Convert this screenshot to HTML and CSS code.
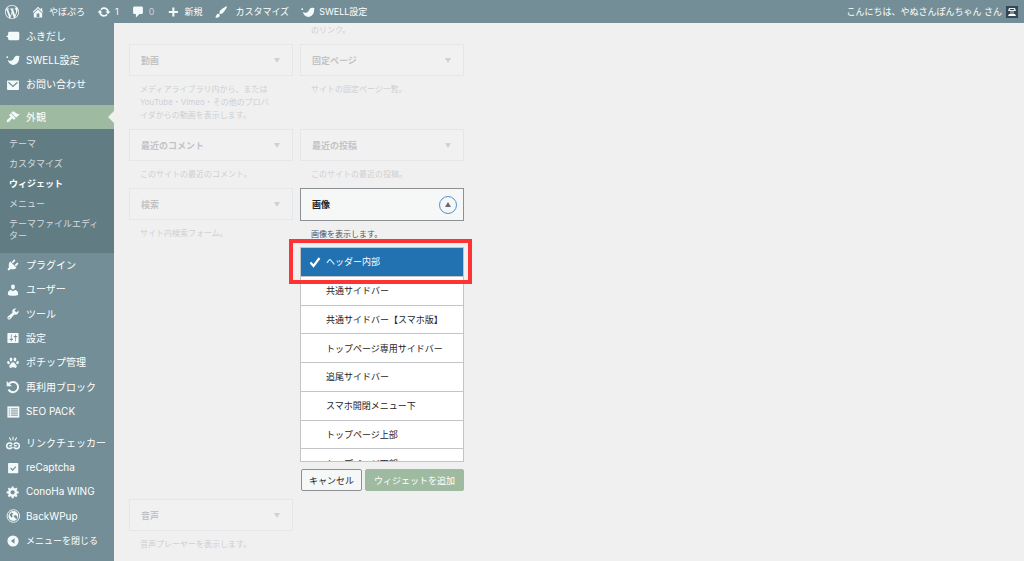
FILE: index.html
```html
<!DOCTYPE html>
<html lang="ja">
<head>
<meta charset="utf-8">
<title>ウィジェット</title>
<link rel="stylesheet" href="styles.css">
</head>
<body>
<header class="bar">
  <a class="bar-item bar-logo" href="#" aria-label="WordPress"><svg class="icon" viewBox="0 0 20 20"><path d="M20 10c0-5.51-4.49-10-10-10C4.48 0 0 4.49 0 10c0 5.52 4.48 10 10 10 5.51 0 10-4.48 10-10zM7.78 15.37L4.37 6.22c.55-.02 1.17-.08 1.17-.08.5-.06.44-1.13-.06-1.11 0 0-1.45.11-2.37.11-.18 0-.37 0-.58-.01C4.12 2.69 6.87 1.11 10 1.11c2.33 0 4.45.87 6.05 2.34-.68-.11-1.65.39-1.65 1.58 0 .74.45 1.36.9 2.1.35.61.55 1.36.55 2.46 0 1.49-1.4 5-1.4 5l-3.03-8.37c.54-.02.82-.17.82-.17.5-.05.44-1.25-.06-1.22 0 0-1.44.12-2.38.12-.87 0-2.33-.12-2.33-.12-.5-.03-.56 1.2-.06 1.22l.92.08 1.26 3.41zM17.41 10c.24-.64.74-1.87.43-4.25.7 1.29 1.05 2.71 1.05 4.25 0 3.29-1.73 6.24-4.4 7.78.97-2.59 1.94-5.2 2.92-7.78zM6.1 18.09C3.12 16.65 1.11 13.53 1.11 10c0-1.3.23-2.48.72-3.59C3.25 10.3 4.67 14.2 6.1 18.09zm4.03-6.63l2.58 6.98c-.86.29-1.76.45-2.71.45-.79 0-1.57-.11-2.29-.33.81-2.38 1.62-4.74 2.42-7.1z"/></svg></a>
  <a class="bar-item" href="#"><svg class="icon" viewBox="0 0 20 20"><path d="M16 8.5l1.53 1.53-1.06 1.06L10 4.6l-6.47 6.49-1.06-1.06L10 2.5l4 4v-2h2v4zm-6-2.46l6 5.99V18H4v-5.97zM12 17v-5H8v5h4z"/></svg>やぼぷろ</a>
  <a class="bar-item" href="#"><svg class="icon" viewBox="0 0 20 20"><path d="M10.2 3.28c3.53 0 6.43 2.61 6.92 6h2.08l-3.5 4-3.5-4h2.32c-.45-1.97-2.21-3.45-4.32-3.45-1.45 0-2.73.71-3.54 1.78L4.95 5.66C6.23 4.2 8.11 3.28 10.2 3.28zm-.4 13.44c-3.52 0-6.43-2.61-6.92-6H.8l3.5-4c1.17 1.33 2.33 2.67 3.5 4H5.48c.45 1.97 2.21 3.45 4.32 3.45 1.45 0 2.73-.71 3.54-1.78l1.71 1.95c-1.28 1.46-3.15 2.38-5.25 2.38z"/></svg>1</a>
  <a class="bar-item" href="#"><svg class="icon" viewBox="0 0 20 20"><path d="M5 2h10c1.100 0 2 .9 2 2v7c0 1.100-.9 2-2 2h-3l-5 5v-5H5c-1.100 0-2-.9-2-2V4c0-1.100.9-2 2-2z"/></svg><span class="muted">0</span></a>
  <a class="bar-item" href="#"><svg class="icon" viewBox="0 0 20 20"><path d="M17 8.500v3h-5v5H9v-5H4v-3h5v-5h3v5h5z"/></svg>新規</a>
  <a class="bar-item bar-wide" href="#"><svg class="icon" viewBox="0 0 20 20"><path d="M18.33 3.57s.27-.8-.31-1.36c-.53-.52-1.22-.24-1.22-.24-.61.3-5.76 3.47-7.67 5.57-.86.96-2.06 3.79-1.09 4.82.92.98 3.96-.17 4.79-1 2.06-2.06 5.21-7.17 5.5-7.79zM1.4 17.65c2.37-1.56 1.46-3.41 3.23-4.64.93-.65 2.22-.62 3.08.29.63.67.8 2.57-.16 3.46-1.57 1.45-4 1.55-6.15.89z"/></svg>カスタマイズ</a>
  <a class="bar-item" href="#"><svg class="icon" viewBox="0 0 20 20"><path d="M2.500 10c2 1.500 5.500 1.800 8-1C12 7 12.500 4 16 4c1.500 0 2.500.8 3.500 1-.8.8-.8 1.500-.8 3 0 5-3.700 9-8.200 9-4 0-6.800-3-8-7z"/><circle cx="1.800" cy="6" r="1.300"/></svg>SWELL設定</a>
  <a class="bar-item bar-account" href="#">こんにちは、やぬさんぽんちゃん さん<svg class="avatar" viewBox="0 0 12 12"><rect width="12" height="12" fill="#33475b"/><path d="M3 2h6l1 3H2z" fill="#e8eeee"/><path d="M4 5h4v3H4z" fill="#7d8b98"/><path d="M3 8h6l1 2H2z" fill="#fff"/><path d="M4 3h4v1H4z" fill="#33475b"/></svg></a>
</header>
<div class="layout">
  <nav class="side" aria-label="メインメニュー">
    <div class="group group-first">
      <a class="item" href="#"><svg class="icon" viewBox="0 0 20 20"><path d="M5 4h12q2 0 2 2v8q0 2-2 2H5q-2 0-2-2v-2L0 10.500 3 9V6q0-2 2-2z"/></svg>ふきだし</a>
      <a class="item" href="#"><svg class="icon" viewBox="0 0 20 20"><path d="M2.500 10c2 1.500 5.500 1.800 8-1C12 7 12.500 4 16 4c1.500 0 2.500.8 3.500 1-.8.8-.8 1.500-.8 3 0 5-3.700 9-8.200 9-4 0-6.800-3-8-7z"/><circle cx="1.800" cy="6" r="1.300"/></svg>SWELL設定</a>
      <a class="item" href="#"><svg class="icon" viewBox="0 0 20 20"><rect x="1.500" y="3.500" width="17" height="13.500" rx="1"/><path d="M3.500 6l6.500 6 6.500-6" fill="none" stroke="#738e96" stroke-width="1.800"/></svg>お問い合わせ</a>
    </div>
    <a class="item item-current" href="#"><svg class="icon" viewBox="0 0 20 20"><path d="M14.480 11.060L7.410 3.990l1.500-1.500c.5-.56 2.300-.47 3.510.32 1.210.8 1.430 1.280 2.910 2.100 1.180.64 2.450 1.260 4.450.85zm-.71.71L6.700 4.700 4.930 6.470c-.39.39-.39 1.020 0 1.410l1.060 1.060c.39.39.39 1.030 0 1.420-.6.6-1.430 1.110-2.210 1.690-.35.26-.7.53-1.010.84C1.430 14.230.4 16.080 1.400 17.070c.99 1 2.840-.03 4.180-1.360.31-.31.58-.66.85-1.020.57-.78 1.080-1.610 1.690-2.210.39-.39 1.020-.39 1.410 0l1.060 1.060c.39.39 1.020.39 1.410 0z"/></svg>外観</a>
    <div class="submenu">
      <a href="#">テーマ</a>
      <a href="#">カスタマイズ</a>
      <a class="selected" href="#">ウィジェット</a>
      <a href="#">メニュー</a>
      <a href="#">テーマファイルエディター</a>
    </div>
    <div class="group group-tools">
      <a class="item" href="#"><svg class="icon" viewBox="0 0 20 20"><path d="M13.110 4.360L9.870 7.600 8 5.730l3.240-3.240c.35-.34 1.050-.2 1.560.32.52.51.66 1.210.31 1.550zm-8 1.770l.91-1.120 9.010 9.010-1.190.84c-.71.71-2.630 1.160-3.820 1.160H6.140L4.900 17.260c-.59.59-1.540.59-2.120 0-.59-.58-.59-1.530 0-2.120l1.240-1.240v-3.880c0-1.130.4-3.190 1.090-3.890zm7.260 3.970l3.240-3.240c.34-.35 1.040-.21 1.550.31.52.51.66 1.210.31 1.550l-3.240 3.250z"/></svg>プラグイン</a>
      <a class="item" href="#"><svg class="icon" viewBox="0 0 20 20"><path d="M10 9.250c-2.270 0-2.730-3.440-2.730-3.440C7 4.020 7.820 2 9.970 2c2.160 0 2.980 2.020 2.710 3.810 0 0-.41 3.440-2.680 3.440zm0 2.570L12.720 10c2.390 0 4.520 2.330 4.520 4.530v2.490s-3.650 1.130-7.240 1.130c-3.650 0-7.240-1.130-7.240-1.130v-2.490c0-2.250 1.940-4.480 4.470-4.480z"/></svg>ユーザー</a>
      <a class="item" href="#"><svg class="icon" viewBox="0 0 20 20"><path d="M16.680 9.770c-1.340 1.340-3.300 1.670-4.950.99l-5.410 6.520c-.99.99-2.590.99-3.580 0s-.99-2.590 0-3.570l6.520-5.420c-.68-1.650-.35-3.610.99-4.950 1.280-1.280 3.120-1.620 4.720-1.060l-2.890 2.890 2.820 2.820 2.860-2.870c.53 1.580.18 3.390-1.080 4.650zM3.810 16.210c.4.39 1.040.39 1.430 0 .4-.4.4-1.040 0-1.430-.39-.4-1.030-.4-1.430 0-.39.39-.39 1.030 0 1.430z"/></svg>ツール</a>
      <a class="item" href="#"><svg class="icon" viewBox="0 0 20 20"><path d="M18 16V4c0-.55-.45-1-1-1H3c-.55 0-1 .45-1 1v12c0 .55.45 1 1 1h14c.55 0 1-.45 1-1zM8 11h1c.55 0 1 .45 1 1s-.45 1-1 1H8v1.500c0 .28-.22.5-.5.5s-.5-.22-.5-.5V13H6c-.55 0-1-.45-1-1s.45-1 1-1h1V5.500c0-.28.22-.5.5-.5s.5.22.5.5V11zm5-2h-1c-.55 0-1-.45-1-1s.45-1 1-1h1V5.500c0-.28.22-.5.5-.5s.5.22.5.5V7h1c.55 0 1 .45 1 1s-.45 1-1 1h-1v5.500c0 .28-.22.5-.5.5s-.5-.22-.5-.5V9z"/></svg>設定</a>
      <a class="item" href="#"><svg class="icon" viewBox="0 0 20 20"><ellipse cx="7.200" cy="5" rx="1.900" ry="2.700"/><ellipse cx="12.800" cy="5" rx="1.900" ry="2.700"/><ellipse cx="3.500" cy="9.500" rx="1.800" ry="2.400" transform="rotate(-20 3.500 9.500)"/><ellipse cx="16.500" cy="9.500" rx="1.800" ry="2.400" transform="rotate(20 16.500 9.500)"/><path d="M10 9c2.500 0 3 2.500 4.500 4s1 4-1 4c-1.500 0-2-.8-3.500-.8s-2 .8-3.500.8c-2 0-2.500-2.500-1-4S7.500 9 10 9z"/></svg>ポチップ管理</a>
      <a class="item" href="#"><svg class="icon" viewBox="0 0 20 20"><path d="M4.500 5.300A7.300 7.300 0 1 1 3.500 13.500" fill="none" stroke="#f3fafb" stroke-width="2.800"/><path d="M1 1.500v7.500h7.500z"/></svg>再利用ブロック</a>
      <a class="item" href="#"><svg class="icon" viewBox="0 0 20 20"><path d="M2 2h17v16H2z"/><path d="M4 5.500h1.500M7 5.500h10M4 8.500h1.500M7 8.500h10M4 11.500h1.500M7 11.500h10M4 14.500h1.500M7 14.500h10" stroke="#738e96" stroke-width="1.400"/></svg>SEO PACK</a>
    </div>
    <div class="group group-plugins">
      <a class="item" href="#"><svg class="icon" viewBox="0 0 20 20"><g fill="none" stroke="#f3fafb" stroke-width="2.200" stroke-linecap="round"><path d="M8.500 11.500C7 9 1 9.500 1 14s5.500 5 7.500 2.500M11.500 11.500C13 9 19 9.500 19 14s-5.500 5-7.500 2.500M5.500 14h2M12.500 14h2"/><path d="M10 1.500v4M5 2.500l2 3.500M15 2.500L13 6" stroke-width="1.600"/></g></svg>リンクチェッカー</a>
      <a class="item" href="#"><svg class="icon" viewBox="0 0 20 20"><rect x="3" y="3" width="14.500" height="14.500" rx="1"/><path d="M6.500 10l3 3 4.500-5" fill="none" stroke="#738e96" stroke-width="1.800"/></svg>reCaptcha</a>
      <a class="item" href="#"><svg class="icon" viewBox="0 0 20 20"><path d="M18 12h-2.180c-.17.7-.44 1.350-.81 1.930l1.540 1.540-2.100 2.100-1.540-1.540c-.58.36-1.230.63-1.910.79V19H8v-2.180c-.68-.16-1.330-.43-1.910-.79l-1.540 1.540-2.120-2.120 1.540-1.540c-.36-.58-.63-1.230-.79-1.910H1V9.030h2.170c.16-.7.44-1.350.8-1.940L2.430 5.550l2.100-2.100 1.540 1.540c.58-.37 1.240-.64 1.930-.81V2h3v2.180c.68.160 1.330.43 1.910.79l1.540-1.540 2.120 2.120-1.540 1.540c.36.59.64 1.240.8 1.940H18V12zm-8.500 1.500c1.660 0 3-1.340 3-3s-1.340-3-3-3-3 1.340-3 3 1.340 3 3 3z"/></svg>ConoHa WING</a>
      <a class="item" href="#"><svg class="icon" viewBox="0 0 20 20"><circle cx="10.500" cy="10" r="9" fill="none" stroke="#f3fafb" stroke-width="1.300"/><circle cx="10.500" cy="10" r="7"/><path d="M5 8l3-3 3 2.500-2.500.5 1 3.500-2 .5zM10.500 10l3.500-1.500 2.500 2.500-1.500 4-2-2z" fill="#738e96"/></svg>BackWPup</a>
      <button class="item item-collapse" type="button"><svg class="icon" viewBox="0 0 20 20"><path fill-rule="evenodd" d="M10 2a8 8 0 1 0 0 16 8 8 0 0 0 0-16zM12.200 6v8L7 10z"/></svg>メニューを閉じる</button>
    </div>
  </nav>
  <main class="content">
    <div class="widgets">
      <section class="widget faded continued"><p class="desc">のリンク。</p></section>
      <section class="widget faded"><button class="title" type="button">動画<span class="arrow"></span></button><p class="desc">メディアライブラリ内から、または YouTube・Vimeo・その他のプロバイダからの動画を表示します。</p></section>
      <section class="widget faded"><button class="title" type="button">固定ページ<span class="arrow"></span></button><p class="desc">サイトの固定ページ一覧。</p></section>
      <section class="widget faded"><button class="title" type="button">最近のコメント<span class="arrow"></span></button><p class="desc">このサイトの最近のコメント。</p></section>
      <section class="widget faded"><button class="title" type="button">最近の投稿<span class="arrow"></span></button><p class="desc">このサイトの最近の投稿。</p></section>
      <section class="widget faded"><button class="title" type="button">検索<span class="arrow"></span></button><p class="desc">サイト内検索フォーム。</p></section>
      <section class="widget open">
        <button class="title" type="button" aria-expanded="true">画像<span class="ring"><span class="arrow up"></span></span></button>
        <p class="desc">画像を表示します。</p>
        <div class="chooser">
          <div class="scroll">
            <ul class="areas">
              <li><button class="area chosen" type="button"><svg class="check" viewBox="0 0 12 12"><path d="M1.500 6.500l3 3.500 6-8" fill="none" stroke="#fff" stroke-width="2.200"/></svg>ヘッダー内部</button></li>
              <li><button class="area" type="button">共通サイドバー</button></li>
              <li><button class="area" type="button">共通サイドバー【スマホ版】</button></li>
              <li><button class="area" type="button">トップページ専用サイドバー</button></li>
              <li><button class="area" type="button">追尾サイドバー</button></li>
              <li><button class="area" type="button">スマホ開閉メニュー下</button></li>
              <li><button class="area" type="button">トップページ上部</button></li>
              <li><button class="area" type="button">トップページ下部</button></li>
            </ul>
          </div>
          <div class="highlight"></div>
        </div>
        <div class="actions"><button class="btn" type="button">キャンセル</button><button class="btn primary" type="button">ウィジェットを追加</button></div>
      </section>
      <section class="widget faded"><button class="title" type="button">音声<span class="arrow"></span></button><p class="desc">音声プレーヤーを表示します。</p></section>
    </div>
  </main>
</div>
</body>
</html>
```
FILE: styles.css
```css
* { box-sizing: border-box; }
body {
  margin: 0;
  height: 100vh;
  display: flex;
  flex-direction: column;
  overflow: hidden;
  background: #f0f0f1;
  color: #1d2327;
  font: 9px/13px Inter, "Noto Sans CJK JP", sans-serif;
}
a { color: inherit; text-decoration: none; }
button { font: inherit; color: inherit; margin: 0; cursor: pointer; }
p, ul { margin: 0; padding: 0; }
.icon { width: 14px; height: 14px; flex: none; fill: #f3fafb; }

.bar {
  display: flex;
  align-items: center;
  gap: 12px;
  height: 23px;
  flex: none;
  padding: 0 6px 0 5px;
  background: #738e96;
  color: #fff;
}
.bar-item { display: flex; align-items: center; gap: 4px; white-space: nowrap; }
.bar-wide { gap: 7px; }
.muted { opacity: .6; }
.bar-account { margin-left: auto; }
.avatar { width: 12px; height: 12px; }

.layout { display: flex; flex: 1; min-height: 0; }
.side {
  width: 114px;
  flex: none;
  padding-top: 1px;
  background: #738e96;
  color: #fff;
  font-size: 10px;
}
.group { display: grid; grid-auto-rows: 1fr; }
.group-first { height: 73px; margin-bottom: 8px; }
.group-tools { height: 171px; margin-bottom: 7px; }
.group-plugins { height: 122px; }
.item {
  display: flex;
  align-items: center;
  gap: 6px;
  padding: 0 0 0 6px;
  border: 0;
  background: none;
  white-space: nowrap;
  text-align: left;
}
.item-current { position: relative; height: 24px; background: #9ebaa0; }
.item-current::after {
  content: "";
  position: absolute;
  right: 0;
  top: 6px;
  border: 6px solid transparent;
  border-left: 0;
  border-right-color: #f0f0f1;
}
.item-collapse { font-size: 9px; }
.submenu {
  padding: 5px 8px 7px 9px;
  background: #627c83;
  color: #d5dddf;
  font-size: 9px;
  line-height: 12px;
}
.submenu a { display: block; padding: 4px 0; }
.submenu .selected { color: #fff; font-weight: 700; }

.content { flex: 1; min-width: 0; overflow: hidden; padding: 1px 15px 0; }
.widgets {
  display: grid;
  grid-template-columns: 1fr 1fr;
  gap: 7px;
  max-width: 335px;
}
.continued { grid-column: 2; }
.faded { opacity: .22; }
.title {
  display: flex;
  align-items: center;
  justify-content: space-between;
  width: 100%;
  height: 32px;
  padding: 0 12px 0 11px;
  border: 1px solid #c3c4c7;
  background: #f6f7f7;
  font-weight: 700;
}
.arrow {
  border: 3px solid transparent;
  border-top: 5px solid #646970;
  border-bottom: 0;
}
.arrow.up { border-top: 0; border-bottom: 5px solid #646970; }
.desc { margin-top: 7px; padding: 0 20px 0 11px; color: #50575e; font-size: 8px; }
.continued .desc { margin-top: 0; }
.open .title { height: 33px; padding-right: 6px; border-color: #8c8f94; }
.ring {
  display: flex;
  align-items: center;
  justify-content: center;
  width: 18px;
  height: 18px;
  border: 1px solid #4f94d4;
  border-radius: 50%;
}
.chooser { position: relative; margin-top: 6px; }
.scroll {
  height: 215px;
  overflow-y: auto;
  scrollbar-width: none;
  border: 1px solid #c3c4c7;
  background: #fff;
}
.areas { display: grid; grid-auto-rows: 1fr; height: 230px; list-style: none; }
.areas li { border-bottom: 1px solid #c3c4c7; }
.area {
  position: relative;
  width: 100%;
  height: 100%;
  padding: 0 0 0 25px;
  border: 0;
  background: #fff;
  text-align: left;
}
.area.chosen { background: #2271b1; color: #fff; }
.check { position: absolute; left: 8px; top: 8px; width: 12px; height: 12px; }
.highlight {
  position: absolute;
  inset: -8px -8px auto -11px;
  height: 45px;
  border: 4px solid #ff3333;
  pointer-events: none;
}
.actions { display: flex; gap: 3px; margin: 7px 0 1px; padding-left: 1px; }
.btn {
  height: 22px;
  padding: 0 7px;
  border: 1px solid #8c8f94;
  border-radius: 2px;
  background: #f6f7f7;
  white-space: nowrap;
}
.btn.primary { flex: auto; border-color: #9ebaa0; background: #9ebaa0; color: #fff; }
```
